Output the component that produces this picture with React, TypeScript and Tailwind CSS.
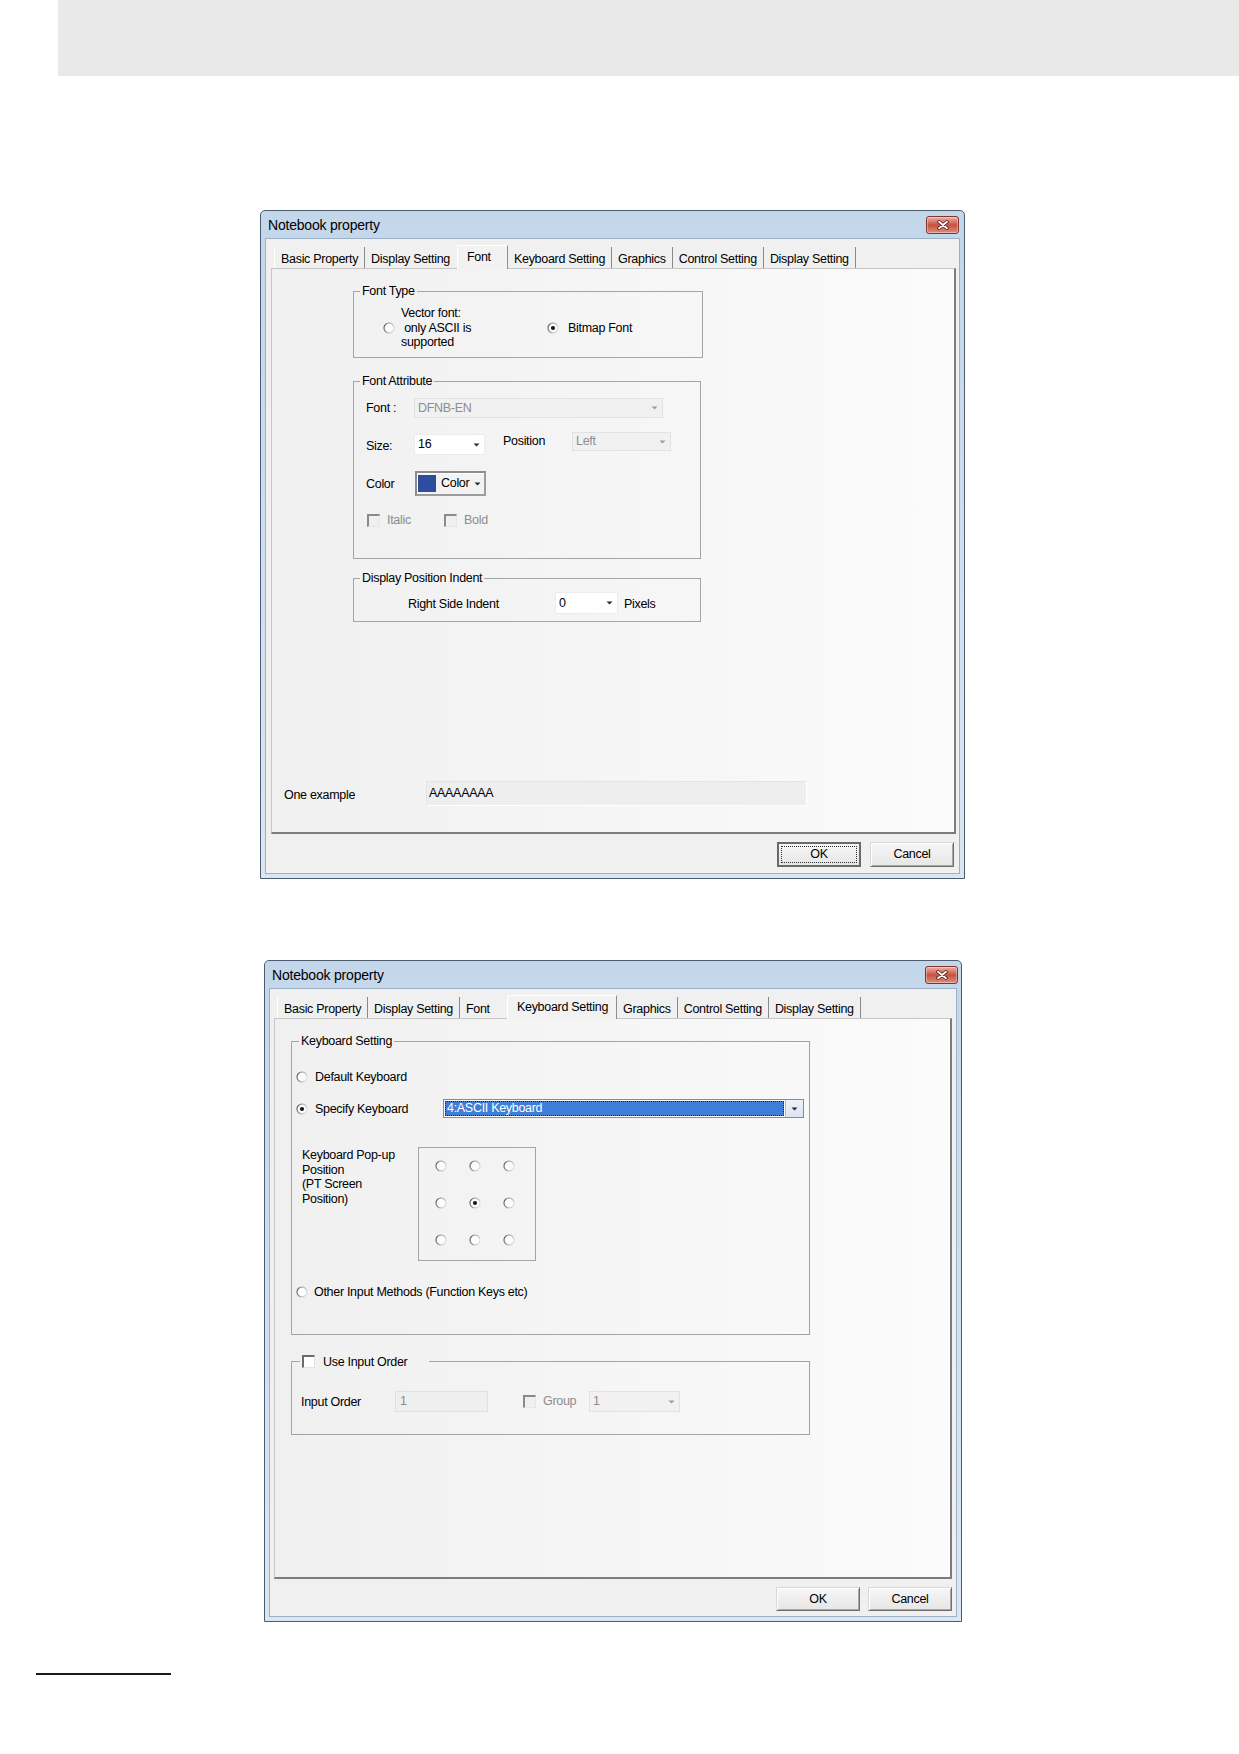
import React from 'react';

const TABS = [
  'Basic Property',
  'Display Setting',
  'Font',
  'Keyboard Setting',
  'Graphics',
  'Control Setting',
  'Display Setting',
];

function Arrow({ color = '#2a2a2a' }: { color?: string }) {
  return (
    <svg width="7" height="4" viewBox="0 0 7 4" className="shrink-0">
      <path d="M0.5 0.5h6L3.5 3.6z" fill={color} />
    </svg>
  );
}

function Radio({ checked = false }: { checked?: boolean }) {
  return (
    <svg width="12" height="12" viewBox="0 0 12 12" className="shrink-0">
      <defs>
        <linearGradient id="radio-ring" x1="0" y1="0" x2="1" y2="0.4">
          <stop offset="0" stopColor="#545454" />
          <stop offset="0.55" stopColor="#a0a0a0" />
          <stop offset="1" stopColor="#dcdcdc" />
        </linearGradient>
      </defs>
      <circle cx="6" cy="6" r="5" fill="#fcfcfc" stroke="url(#radio-ring)" strokeWidth="1.2" />
      {checked && <circle cx="6" cy="6" r="2.1" fill="#141414" />}
    </svg>
  );
}

function Check({ disabled = false }: { disabled?: boolean }) {
  return disabled ? (
    <span className="block h-[13px] w-[13px] shrink-0 border-t-2 border-l-2 border-r border-b border-t-[#8a8a8a] border-l-[#8a8a8a] border-r-[#e6e6e6] border-b-[#e6e6e6] bg-[#f0f0f0]" />
  ) : (
    <span className="block h-[13px] w-[13px] shrink-0 border-t-2 border-l-2 border-r border-b border-t-[#6c6c6c] border-l-[#6c6c6c] border-r-[#e2e2e2] border-b-[#e2e2e2] bg-white" />
  );
}

function Combo({ value, disabled = false, className }: { value: string; disabled?: boolean; className: string }) {
  return (
    <div
      className={`flex shrink-0 items-center ${
        disabled ? 'border border-[#e2e2e2] bg-[#f1f1f1] text-[#8d8d8d]' : 'border border-[#ececec] bg-white text-black'
      } ${className}`}
    >
      <span className="flex-1 pl-[3px]">{value}</span>
      <span className="flex w-[16px] items-center justify-center self-stretch">
        <Arrow color={disabled ? '#9c9c9c' : '#2a2a2a'} />
      </span>
    </div>
  );
}

function CloseButton() {
  return (
    <div className="flex h-[18px] w-[33px] items-center justify-center rounded-[3px] border border-[#7e352e] bg-linear-to-b from-[#eab0a8] via-[#c9503f] to-[#dc8e80] shadow-[inset_0_0_0_1px_rgba(255,255,255,0.35)]">
      <svg width="12" height="10" viewBox="0 0 12 10">
        <path d="M2 1.8l8 6.4M10 1.8l-8 6.4" stroke="#5b1b15" strokeWidth="3.4" strokeLinecap="round" />
        <path d="M2 1.8l8 6.4M10 1.8l-8 6.4" stroke="#ffffff" strokeWidth="1.8" strokeLinecap="round" />
      </svg>
    </div>
  );
}

function TabStrip({ active }: { active: number }) {
  return (
    <div className="flex h-[23px] items-end pl-[3px]">
      {TABS.map((t, i) =>
        i === active ? (
          <div
            key={i}
            className="relative z-10 -mb-[1px] flex h-[24px] min-w-[51px] items-start border-t border-l border-r border-t-white border-l-white border-r-[#8e8e8e] bg-[#f2f2f2] pl-[9px] pr-[8px] pt-[4px]"
          >
            {t}
          </div>
        ) : (
          <div
            key={i}
            className={`flex h-[21px] min-w-[47px] items-start border-r border-r-[#8a8a8a] px-[6px] pt-[5px] ${
              i === 0 ? 'border-l border-l-white' : ''
            } ${i === active - 1 ? 'border-r-transparent' : ''}`}
          >
            {t}
          </div>
        )
      )}
    </div>
  );
}

function Button({ label, focus = false }: { label: string; focus?: boolean }) {
  return focus ? (
    <div className="flex h-full w-[84px] items-center justify-center border-2 border-[#6a6a6a] bg-linear-to-b from-[#f7f7f7] to-[#e6e6e6] p-[2px]">
      <div className="flex h-full w-full items-center justify-center border border-dotted border-[#303030]">{label}</div>
    </div>
  ) : (
    <div className="flex h-full w-[84px] items-center justify-center border border-t-[#d8d8d8] border-l-[#d8d8d8] border-r-[#6e6e6e] border-b-[#6e6e6e] bg-linear-to-b from-[#f7f7f7] to-[#e6e6e6] shadow-[inset_1px_1px_0_#ffffff,inset_-1px_-1px_0_#a8a8a8]">
      {label}
    </div>
  );
}

function Legend({ children, className = 'ml-[6px] px-[2px]' }: { children: React.ReactNode; className?: string }) {
  return <legend className={className}>{children}</legend>;
}

function FontDialog() {
  return (
    <div className="flex h-[669px] w-[705px] flex-col rounded-t-[5px] border border-[#4b5c70] bg-linear-to-b from-[#c4d6ea] to-[#dbe6f2]">
      <div className="flex h-[27px] shrink-0 items-center justify-between pl-[7px] pr-[5px] pt-[1px]">
        <span className="text-[14px] tracking-[-0.2px]">Notebook property</span>
        <CloseButton />
      </div>
      <div className="mx-[4px] mb-[4px] flex flex-1 flex-col border border-[#9db1c6] bg-[#f0f0f0] pl-[5px] pr-[3px] pt-[6px]">
        <TabStrip active={2} />
        <div className="flex h-[566px] flex-col border-t border-l border-r-2 border-b-2 border-t-[#c6c6c6] border-l-[#c6c6c6] border-r-[#7c7c7c] border-b-[#7c7c7c] bg-linear-to-r from-[#f0f0f0] to-[#fbfbfb]">
          <fieldset className="ml-[81px] mt-[15px] h-[74px] w-[350px] border border-[#a4a4a4]">
            <Legend>Font Type</Legend>
            <div className="flex h-[58px] items-center pl-[29px]">
              <div className="flex w-[164px] items-center">
                <Radio />
                <span className="ml-[6px] whitespace-pre leading-[14.5px]">{'Vector font:\n only ASCII is\nsupported'}</span>
              </div>
              <Radio checked />
              <span className="ml-[9px]">Bitmap Font</span>
            </div>
          </fieldset>

          <fieldset className="ml-[81px] mt-[16px] h-[185px] w-[348px] border border-[#a4a4a4]">
            <Legend>Font Attribute</Legend>
            <div className="flex flex-col pl-[12px]">
              <div className="mt-[9px] flex h-[20px] items-center">
                <span className="w-[48px]">Font :</span>
                <Combo disabled value="DFNB-EN" className="h-[20px] w-[249px]" />
              </div>
              <div className="mt-[14px] flex h-[23px] items-start">
                <span className="mt-[7px] w-[48px]">Size:</span>
                <Combo value="16" className="mt-[2px] h-[21px] w-[71px]" />
                <span className="ml-[18px] mt-[2px] w-[69px]">Position</span>
                <Combo disabled value="Left" className="h-[19px] w-[99px]" />
              </div>
              <div className="mt-[16px] flex h-[25px] items-center">
                <span className="mt-[2px] w-[49px]">Color</span>
                <div className="flex h-[25px] w-[71px] items-center border-2 border-t-[#8c8c8c] border-l-[#8c8c8c] border-r-[#9c9c9c] border-b-[#9c9c9c] bg-[#f3f3f3] pl-[1px] shadow-[inset_1px_1px_0_#ffffff]">
                  <span className="block h-[17px] w-[18px] bg-[#2f4d9e]" />
                  <span className="ml-[5px]">Color</span>
                  <span className="ml-[5px]">
                    <Arrow />
                  </span>
                </div>
              </div>
              <div className="mt-[17px] flex h-[14px] items-center pl-[1px] text-[#8c8c8c]">
                <div className="flex w-[77px] items-center">
                  <Check disabled />
                  <span className="ml-[7px]">Italic</span>
                </div>
                <Check disabled />
                <span className="ml-[7px]">Bold</span>
              </div>
            </div>
          </fieldset>

          <fieldset className="ml-[81px] mt-[12px] h-[51px] w-[348px] border border-[#a4a4a4]">
            <Legend>Display Position Indent</Legend>
            <div className="mt-[6px] flex h-[22px] items-center pl-[54px]">
              <span className="mt-[2px] w-[147px]">Right Side Indent</span>
              <Combo value="0" className="h-[22px] w-[63px]" />
              <span className="ml-[6px] mt-[2px]">Pixels</span>
            </div>
          </fieldset>

          <div className="ml-[12px] mt-[159px] flex items-center">
            <span className="mt-[4px] w-[142px]">One example</span>
            <div className="flex h-[25px] w-[381px] items-center border border-t-[#e4e4e4] border-l-[#e4e4e4] border-r-white border-b-white bg-[#eeeeee] pb-[1px] pl-[2px]">
              AAAAAAAA
            </div>
          </div>
        </div>
        <div className="mt-[8px] flex h-[25px] justify-end gap-[9px] pr-[2px]">
          <Button label="OK" focus />
          <Button label="Cancel" />
        </div>
      </div>
    </div>
  );
}

function KeyboardDialog() {
  return (
    <div className="flex h-[662px] w-[698px] flex-col rounded-t-[5px] border border-[#4b5c70] bg-linear-to-b from-[#c4d6ea] to-[#dbe6f2]">
      <div className="flex h-[27px] shrink-0 items-center justify-between pl-[7px] pr-[3px] pt-[1px]">
        <span className="text-[14px] tracking-[-0.2px]">Notebook property</span>
        <CloseButton />
      </div>
      <div className="mx-[4px] mb-[4px] flex flex-1 flex-col border border-[#9db1c6] bg-[#f0f0f0] px-[4px] pt-[6px]">
        <TabStrip active={3} />
        <div className="flex h-[561px] flex-col border-t border-l border-r-2 border-b-2 border-t-[#c6c6c6] border-l-[#c6c6c6] border-r-[#7c7c7c] border-b-[#7c7c7c] bg-linear-to-r from-[#f0f0f0] to-[#fbfbfb]">
          <fieldset className="ml-[16px] mt-[15px] h-[301px] w-[519px] border border-[#a4a4a4]">
            <Legend className="ml-[7px] px-[2px]">Keyboard Setting</Legend>
            <div className="flex flex-col">
              <div className="mt-[20px] flex h-[15px] items-center pl-[4px]">
                <Radio />
                <span className="ml-[7px] mt-[2px]">Default Keyboard</span>
              </div>
              <div className="mt-[15px] flex h-[19px] items-center pl-[4px]">
                <div className="flex w-[147px] items-center">
                  <Radio checked />
                  <span className="ml-[7px] mt-[2px]">Specify Keyboard</span>
                </div>
                <div className="flex h-[19px] w-[361px] border border-[#6f8fb8] bg-white">
                  <div className="m-[1px] flex flex-1 items-center border border-dotted border-[#0d2a55] bg-[#3d7ed8] pl-[1px] text-white">
                    4:ASCII Keyboard
                  </div>
                  <div className="flex w-[18px] items-center justify-center border-l border-[#a9bedb] bg-linear-to-b from-[#eef3f9] to-[#d9e4f1]">
                    <Arrow />
                  </div>
                </div>
              </div>
              <div className="mt-[29px] flex items-start pl-[10px]">
                <div className="mt-[1px] w-[116px] whitespace-pre leading-[14.5px]">
                  {'Keyboard Pop-up\nPosition\n(PT Screen\nPosition)'}
                </div>
                <div className="grid h-[114px] w-[118px] grid-cols-[34px_34px_34px] grid-rows-[36px_37px_37px] place-items-center border border-[#a4a4a4] pl-[5px]">
                  {Array.from({ length: 9 }).map((_, i) => (
                    <Radio key={i} checked={i === 4} />
                  ))}
                </div>
              </div>
              <div className="mt-[23px] flex h-[15px] items-center pl-[4px]">
                <Radio />
                <span className="ml-[6px] mt-[2px]">Other Input Methods (Function Keys etc)</span>
              </div>
            </div>
          </fieldset>

          <fieldset className="ml-[16px] mt-[19px] h-[81px] w-[519px] border border-[#a4a4a4]">
            <Legend className="ml-[8px] pl-[2px] pr-[22px]">
              <span className="flex h-[15px] items-center">
                <Check />
                <span className="ml-[8px] mt-[2px]">Use Input Order</span>
              </span>
            </Legend>
            <div className="mt-[22px] flex h-[21px] items-center pl-[9px]">
              <span className="mt-[2px] w-[94px]">Input Order</span>
              <div className="flex h-[21px] w-[93px] items-center border border-[#e0e0e0] bg-[#efefef] pl-[4px] text-[#8c8c8c]">1</div>
              <span className="ml-[35px]">
                <Check disabled />
              </span>
              <span className="ml-[7px] w-[46px] text-[#8c8c8c]">Group</span>
              <Combo disabled value="1" className="h-[21px] w-[91px]" />
            </div>
          </fieldset>
        </div>
        <div className="mt-[8px] flex h-[24px] justify-end gap-[8px]">
          <Button label="OK" />
          <Button label="Cancel" />
        </div>
      </div>
    </div>
  );
}

export default function App() {
  return (
    <div className="min-h-[1754px] w-[1239px] bg-white font-['Liberation_Sans',Arial,sans-serif] text-[12.5px] leading-[15px] tracking-[-0.3px] text-black">
      <div className="ml-[58px] h-[76px] bg-[#e9e9e9]" />
      <div className="ml-[260px] mt-[134px]">
        <FontDialog />
      </div>
      <div className="ml-[264px] mt-[81px]">
        <KeyboardDialog />
      </div>
      <div className="ml-[36px] mt-[51px] h-[2px] w-[135px] bg-[#1a1a1a]" />
    </div>
  );
}
